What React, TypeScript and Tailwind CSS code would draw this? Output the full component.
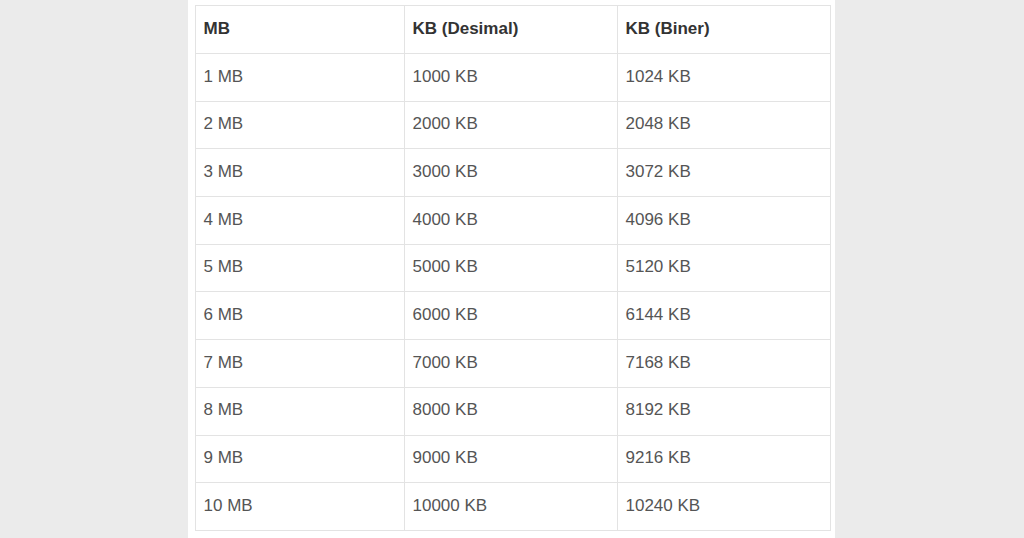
const rows = [
    ["1 MB", "1000 KB", "1024 KB"],
    ["2 MB", "2000 KB", "2048 KB"],
    ["3 MB", "3000 KB", "3072 KB"],
    ["4 MB", "4000 KB", "4096 KB"],
    ["5 MB", "5000 KB", "5120 KB"],
    ["6 MB", "6000 KB", "6144 KB"],
    ["7 MB", "7000 KB", "7168 KB"],
    ["8 MB", "8000 KB", "8192 KB"],
    ["9 MB", "9000 KB", "9216 KB"],
    ["10 MB", "10000 KB", "10240 KB"],
]

export default function App() {
    return (
        <div className="w-[1024px] h-[538px] bg-[#ebebeb] flex justify-center overflow-hidden font-['Liberation_Sans',Arial,sans-serif]">
            <div className="w-[647px] h-full bg-white pl-[7px] pt-[5px] ml-[-2px]">
                <table className="border-collapse w-[636px] table-fixed text-[17px]">
                    <colgroup>
                        <col className="w-[209px]" />
                        <col className="w-[213px]" />
                        <col className="w-[213px]" />
                    </colgroup>
                    <thead>
                        <tr className="h-[48px]">
                            <th className="border border-[#e3e3e3] px-2 pb-[2px] text-left font-bold text-[#333]">MB</th>
                            <th className="border border-[#e3e3e3] px-2 pb-[2px] text-left font-bold text-[#333]">KB (Desimal)</th>
                            <th className="border border-[#e3e3e3] px-2 pb-[2px] text-left font-bold text-[#333]">KB (Biner)</th>
                        </tr>
                    </thead>
                    <tbody>
                        {rows.map((r) => (
                            <tr key={r[0]} className="h-[47.7px]">
                                {r.map((c, i) => (
                                    <td key={i} className="border border-[#e3e3e3] px-2 pb-[2px] text-[#555]">{c}</td>
                                ))}
                            </tr>
                        ))}
                    </tbody>
                </table>
            </div>
        </div>
    )
}
